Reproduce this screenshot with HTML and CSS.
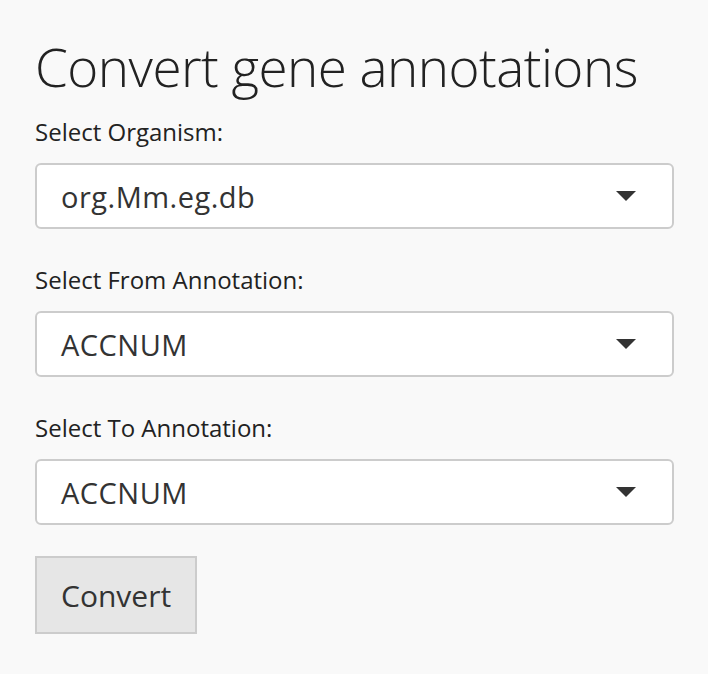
FILE: index.html
```html
<!DOCTYPE html>
<html>
<head>
<meta charset="utf-8">
<link rel="stylesheet" href="styles.css">
</head>
<body>
<div class="panel">
  <h1 class="title">Convert gene annotations</h1>
  <div class="field">
    <label class="label">Select Organism:</label>
    <div class="select"><span>org.Mm.eg.db</span><span class="caret"></span></div>
  </div>
  <div class="field">
    <label class="label">Select From Annotation:</label>
    <div class="select"><span>ACCNUM</span><span class="caret"></span></div>
  </div>
  <div class="field">
    <label class="label">Select To Annotation:</label>
    <div class="select"><span>ACCNUM</span><span class="caret"></span></div>
  </div>
  <button class="btn">Convert</button>
</div>
</body>
</html>
```
FILE: styles.css
```css
html, body {
  margin: 0;
  padding: 0;
  background: #f9f9f9;
}
body {
  font-family: "Open Sans", "Noto Sans", sans-serif;
  color: #222;
}
.panel {
  padding: 30px 34px 0 35px;
  display: flex;
  flex-direction: column;
  align-items: flex-start;
}
.title {
  margin: 0 0 13px 0;
  font-weight: 300;
  font-size: 53px;
  line-height: 74px;
  color: #222;
  letter-spacing: -0.55px;
}
.field {
  width: 100%;
  display: flex;
  flex-direction: column;
  margin-bottom: 36px;
}
.label {
  font-size: 24px;
  line-height: 30px;
  margin-bottom: 16px;
  color: #222;
}
.select {
  box-sizing: border-box;
  height: 66px;
  width: 100%;
  background: #fff;
  border: 2px solid #ccc;
  border-radius: 6px;
  display: flex;
  align-items: center;
  justify-content: space-between;
  padding: 0 36px 0 24px;
  font-size: 29px;
  letter-spacing: 0.5px;
  color: #333;
}
.caret {
  width: 0;
  height: 0;
  border-left: 10px solid transparent;
  border-right: 10px solid transparent;
  border-top: 10px solid #333;
}
.btn {
  margin-top: -5px;
  box-sizing: border-box;
  height: 78px;
  padding: 0 24px;
  background: #e6e6e6;
  border: 2px solid #ccc;
  border-radius: 0;
  font-family: "Open Sans", sans-serif;
  font-size: 30px;
  color: #333;
}
```
